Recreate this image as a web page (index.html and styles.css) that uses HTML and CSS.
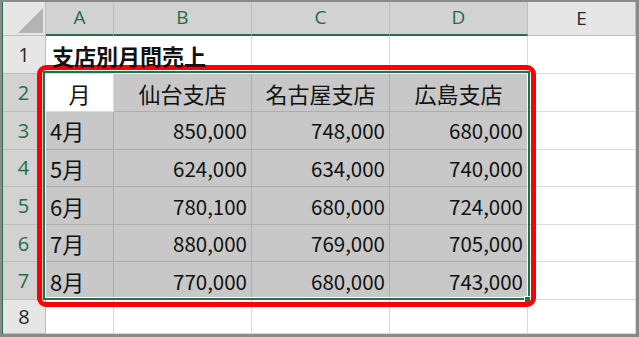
FILE: index.html
```html
<!DOCTYPE html>
<html lang="ja">
<head>
<meta charset="utf-8">
<title>支店別月間売上</title>
<link rel="stylesheet" href="styles.css">
</head>
<body>
<div class="frame">
  <div class="sheet">
    <div class="corner"><svg width="43" height="34" viewBox="0 0 43 34"><polygon points="15,31 40,6 40,31" fill="#b4b4b4"/></svg></div>
    <div class="ch sel">A</div>
    <div class="ch sel">B</div>
    <div class="ch sel">C</div>
    <div class="ch sel">D</div>
    <div class="ch">E</div>

    <div class="rh">1</div>
    <div class="c title nb">支店別月間売上</div>
    <div class="c"></div>
    <div class="c"></div>
    <div class="c"></div>
    <div class="c"></div>

    <div class="rh sel">2</div>
    <div class="c active ctr">月</div>
    <div class="c s ctr">仙台支店</div>
    <div class="c s ctr">名古屋支店</div>
    <div class="c s ctr">広島支店</div>
    <div class="c"></div>

    <div class="rh sel">3</div>
    <div class="c s">4月</div>
    <div class="c s num">850,000</div>
    <div class="c s num">748,000</div>
    <div class="c s num">680,000</div>
    <div class="c"></div>

    <div class="rh sel">4</div>
    <div class="c s">5月</div>
    <div class="c s num">624,000</div>
    <div class="c s num">634,000</div>
    <div class="c s num">740,000</div>
    <div class="c"></div>

    <div class="rh sel">5</div>
    <div class="c s">6月</div>
    <div class="c s num">780,100</div>
    <div class="c s num">680,000</div>
    <div class="c s num">724,000</div>
    <div class="c"></div>

    <div class="rh sel">6</div>
    <div class="c s">7月</div>
    <div class="c s num">880,000</div>
    <div class="c s num">769,000</div>
    <div class="c s num">705,000</div>
    <div class="c"></div>

    <div class="rh sel">7</div>
    <div class="c s">8月</div>
    <div class="c s num">770,000</div>
    <div class="c s num">680,000</div>
    <div class="c s num">743,000</div>
    <div class="c"></div>

    <div class="rh">8</div>
    <div class="c"></div>
    <div class="c"></div>
    <div class="c"></div>
    <div class="c"></div>
    <div class="c"></div>
  </div>
  <div class="selection"></div>
  <div class="handle"></div>
  <div class="highlight"></div>
</div>
</body>
</html>
```
FILE: styles.css
```css
* { box-sizing: border-box; }
html, body { margin: 0; padding: 0; }
body {
  width: 639px;
  height: 337px;
  background: #8a8a8a;
  font-family: "Noto Sans CJK JP", "Noto Sans", sans-serif;
}
.frame {
  position: relative;
  width: 639px;
  height: 337px;
  padding: 2px 3px 3px 2px;
}
.sheet {
  display: grid;
  grid-template-columns: 43px 68px 138px 138px 138px 108px;
  grid-template-rows: 34px 38px 38px 37.5px 37.5px 38px 37px 38px 34px;
  background: #ffffff;
  border-left: 1px solid #217346;
  height: 332px;
  overflow: hidden;
}
.corner {
  background: #e6e6e6;
  border-right: 1px solid #bdbdbd;
  border-bottom: 1px solid #bdbdbd;
}
.corner svg { display: block; }
.ch {
  background: #e6e6e6;
  border-right: 1px solid #bdbdbd;
  border-bottom: 1px solid #bdbdbd;
  display: flex;
  align-items: center;
  justify-content: center;
  font-family: "Open Sans", "Noto Sans", sans-serif;
  font-size: 19px;
  color: #262626;
  padding-bottom: 2px;
}
.ch.sel {
  background: #d2d2d2;
  border-bottom: 2px solid #217346;
  color: #1f6e44;
}
.rh {
  background: #e6e6e6;
  border-right: 1px solid #bdbdbd;
  border-bottom: 1px solid #bdbdbd;
  display: flex;
  align-items: center;
  justify-content: center;
  font-family: "Open Sans", "Noto Sans", sans-serif;
  font-size: 20px;
  color: #262626;
}
.rh.sel {
  background: #d2d2d2;
  border-right: 2px solid #217346;
  color: #1f6e44;
}
.c {
  border-right: 1px solid #d9d9d9;
  border-bottom: 1px solid #d9d9d9;
  display: flex;
  align-items: center;
  padding: 0 4px;
  font-size: 22px;
  color: #111;
  white-space: nowrap;
  min-width: 0;
}
.c.nb { border-right-color: transparent; overflow: visible; position: relative; z-index: 1; }
.title { font-weight: bold; padding-left: 6px; }
.c.s {
  background: #c8c8c8;
  border-right-color: #adadad;
  border-bottom-color: #adadad;
}
.c.active { background: #ffffff; }
.ctr { justify-content: center; }
.num { justify-content: flex-end; font-size: 20.5px; }
.selection {
  position: absolute;
  left: 43px;
  top: 71px;
  width: 487px;
  height: 229px;
  border: 2px solid #217346;
  box-shadow: inset 0 0 0 1px #ffffff;
}
.handle {
  position: absolute;
  left: 524px;
  top: 296px;
  width: 7px;
  height: 7px;
  background: #217346;
  border: 1px solid #ffffff;
}
.highlight {
  position: absolute;
  left: 37px;
  top: 65px;
  width: 499px;
  height: 242px;
  border: 5px solid #ff0000;
  border-radius: 9px;
}
```
